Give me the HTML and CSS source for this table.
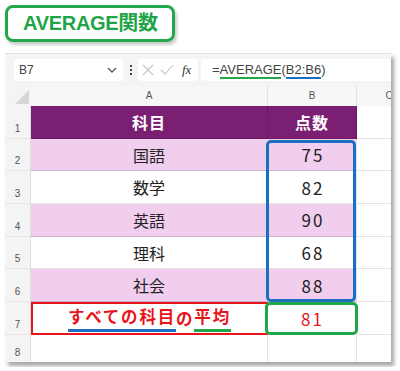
FILE: index.html
```html
<!DOCTYPE html>
<html lang="ja">
<head>
    <meta charset="UTF-8">
    <title>AVERAGE関数</title>
    <link rel="stylesheet" href="styles.css">
</head>
<body>
    <div class="title">AVERAGE関数</div>

    <div class="sheet">
        <div class="formula-bar">
            <div class="name-box">
                <span>B7</span>
                <svg width="10" height="6" viewBox="0 0 10 6"><path d="M1 1 L5 5 L9 1" fill="none" stroke="#555" stroke-width="1.3"/></svg>
            </div>
            <div class="dots"><i></i><i></i><i></i></div>
            <div class="fx-box">
                <svg width="12" height="12" viewBox="0 0 12 12"><path d="M1 1 L11 11 M11 1 L1 11" stroke="#c4c4c4" stroke-width="1.1"/></svg>
                <svg width="14" height="12" viewBox="0 0 14 12"><path d="M1 6 L5 10 L13 1" fill="none" stroke="#c4c4c4" stroke-width="1.1"/></svg>
                <span class="fx">fx</span>
            </div>
            <div class="formula">=<span class="u-green">AVERAGE</span>(<span class="u-blue">B2:B6</span>)</div>
        </div>

        <div class="grid">
            <div class="corner">
                <svg width="14" height="14" viewBox="0 0 14 14"><polygon points="14,0 14,14 0,14" fill="#d6d6d6"/></svg>
            </div>
            <div class="col-head">A</div>
            <div class="col-head">B</div>
            <div class="col-head col-c">C</div>

            <div class="row-num">1</div>
            <div class="cell head">科目</div>
            <div class="cell head">点数</div>
            <div class="cell empty"></div>

            <div class="row-num">2</div>
            <div class="cell pink">国語</div>
            <div class="cell pink num range-start">75<div class="range-box"></div></div>
            <div class="cell empty"></div>

            <div class="row-num">3</div>
            <div class="cell">数学</div>
            <div class="cell num">82</div>
            <div class="cell empty"></div>

            <div class="row-num">4</div>
            <div class="cell pink">英語</div>
            <div class="cell pink num">90</div>
            <div class="cell empty"></div>

            <div class="row-num">5</div>
            <div class="cell">理科</div>
            <div class="cell num">68</div>
            <div class="cell empty"></div>

            <div class="row-num">6</div>
            <div class="cell pink">社会</div>
            <div class="cell pink num">88</div>
            <div class="cell empty"></div>

            <div class="row-num">7</div>
            <div class="cell result-label"><span class="u-blue-lg">すべての科目</span>の<span class="u-green-lg">平均</span></div>
            <div class="cell num result-value">81</div>
            <div class="cell empty"></div>

            <div class="row-num">8</div>
            <div class="cell empty"></div>
            <div class="cell empty"></div>
            <div class="cell empty"></div>
        </div>
    </div>
</body>
</html>
```

FILE: styles.css
```css
body {
    margin: 0;
    padding: 5px;
    background-color: #fff;
    font-family: 'Noto Sans CJK JP', sans-serif;
}
.title {
    box-sizing: border-box;
    width: 170px;
    height: 37px;
    border: 3px solid #22a84a;
    border-radius: 8px;
    box-shadow: 2px 3px 3px rgba(0, 0, 0, 0.2);
    color: #1fa548;
    font-family: 'Liberation Sans', 'Noto Sans CJK JP', sans-serif;
    font-weight: bold;
    font-size: 20px;
    line-height: 31px;
    padding-left: 15px;
    letter-spacing: -0.3px;
}
.sheet {
    margin-top: 11px;
    width: 386px;
    height: 309px;
    overflow: hidden;
    background-color: #fff;
    border-top: 1px solid #e0e0e0;
    box-sizing: border-box;
    box-shadow: 3px 4px 4px rgba(0, 0, 0, 0.35);
}
.formula-bar {
    display: flex;
    align-items: center;
    height: 32px;
    background-color: #f4f4f4;
    padding-left: 9px;
    box-sizing: border-box;
}
.name-box {
    display: flex;
    align-items: center;
    justify-content: space-between;
    width: 109px;
    height: 22px;
    background-color: #fff;
    border-radius: 3px;
    padding: 0 6px 0 5px;
    box-sizing: border-box;
    font-family: 'Liberation Sans', sans-serif;
    font-size: 12px;
    color: #444;
}
.dots {
    display: flex;
    flex-direction: column;
    gap: 2px;
    margin: 0 6px 0 7px;
}
.dots i {
    width: 2px;
    height: 2px;
    background-color: #444;
}
.fx-box {
    display: flex;
    align-items: center;
    gap: 6px;
    width: 60px;
    height: 22px;
    background-color: #fff;
    border-radius: 3px;
    padding-left: 4px;
    box-sizing: border-box;
}
.fx {
    font-family: 'Liberation Serif', serif;
    font-style: italic;
    font-size: 13px;
    color: #333;
    margin-left: 2px;
}
.formula {
    flex: 1;
    height: 22px;
    margin-left: 3px;
    background-color: #fff;
    border-radius: 3px 0 0 3px;
    padding-left: 11px;
    font-family: 'Liberation Sans', sans-serif;
    font-size: 13px;
    line-height: 21px;
    color: #444;
}
.u-green {
    border-bottom: 2px solid #22a84a;
}
.u-blue {
    border-bottom: 2px solid #1b6fc0;
}
.grid {
    display: grid;
    grid-template-columns: 26px 237px 89px 64px;
    grid-template-rows: 20px repeat(7, 32.7px) 28px;
}
.corner {
    display: flex;
    align-items: flex-end;
    justify-content: flex-end;
    background-color: #f4f4f4;
    padding: 0 2px 2px 0;
}
.col-head {
    background-color: #f7f7f7;
    border-right: 1px solid #e2e2e2;
    text-align: center;
    font-family: 'Liberation Sans', sans-serif;
    font-size: 10px;
    line-height: 20px;
    color: #555;
}
.col-c {
    border-right: none;
}
.row-num {
    background-color: #f4f4f4;
    border-right: 1px solid #dedede;
    border-bottom: 1px solid #e6e6e6;
    display: flex;
    align-items: flex-end;
    justify-content: center;
    padding-bottom: 4px;
    box-sizing: border-box;
    font-family: 'Liberation Sans', sans-serif;
    font-size: 10px;
    color: #555;
}
.cell {
    display: flex;
    align-items: center;
    justify-content: center;
    border-right: 1px solid #e4e4e4;
    border-bottom: 1px solid #e4e4e4;
    box-sizing: border-box;
    font-size: 16px;
    color: #222;
}
.cell.num {
    font-size: 17px;
    letter-spacing: 2px;
    padding-left: 2px;
}
.cell.head {
    background-color: #7b1f73;
    border-right-color: #6a1a63;
    border-bottom-color: #6a1a63;
    color: #fff;
    font-weight: bold;
    letter-spacing: 1px;
}
.cell.pink {
    background-color: #f1cdee;
    border-bottom-color: #cdb2cb;
}
.result-label {
    border: 2px solid #e8141c;
    color: #e8141c;
    font-weight: bold;
    font-size: 16.5px;
    letter-spacing: 1.8px;
}
.u-blue-lg {
    padding-bottom: 1px;
    border-bottom: 3px solid #1b6fc0;
}
.u-green-lg {
    padding-bottom: 1px;
    border-bottom: 3px solid #22a84a;
}
.result-value {
    border: 3px solid #1fa84a;
    border-radius: 5px;
    margin: 0 -1px 0 -3px;
    color: #e8141c;
    letter-spacing: 4px;
}
.range-start {
    position: relative;
}
.range-box {
    position: absolute;
    top: 1px;
    left: -2px;
    right: 0;
    height: 162px;
    border: 3px solid #1b6fc0;
    border-radius: 5px;
    box-sizing: border-box;
}
```
